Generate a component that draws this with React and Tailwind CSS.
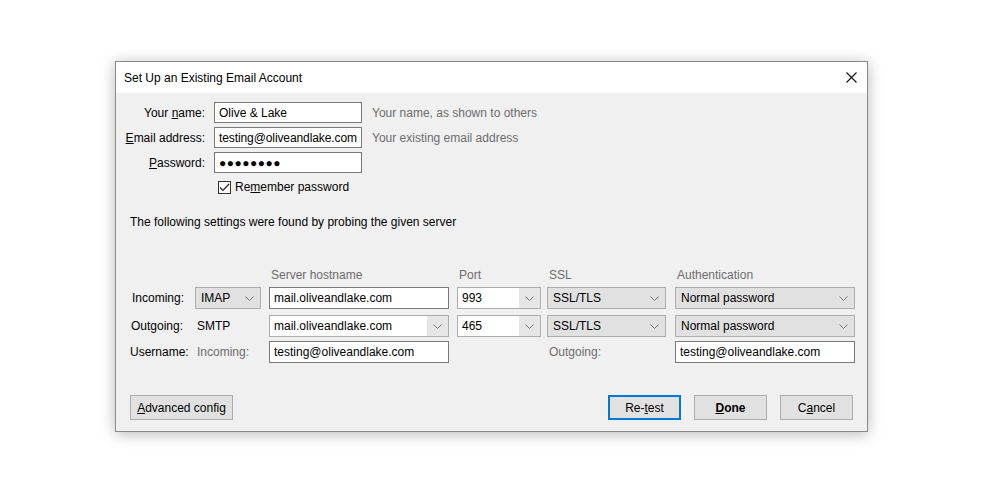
const Chevron = () => (
  <svg width="9" height="5" viewBox="0 0 9 5" className="shrink-0">
    <path d="M0.5 0.5 L4.5 4.5 L8.5 0.5" fill="none" stroke="#7a7a7a" strokeWidth="1" />
  </svg>
);

const TextBox = ({ value, className = '' }) => (
  <div className={`border border-[#7a7a7a] bg-white flex items-center pl-[4px] text-[12px] text-black ${className}`}>
    {value}
  </div>
);

const Select = ({ value, className = '' }) => (
  <div className={`h-[22px] border border-[#adadad] bg-[#e1e1e1] flex items-center justify-between pl-[5px] pr-[6px] text-[12px] text-black ${className}`}>
    <span>{value}</span>
    <Chevron />
  </div>
);

const Combo = ({ value, className = '' }) => (
  <div className={`h-[22px] border border-[#adadad] bg-white flex items-center text-[12px] text-black ${className}`}>
    <span className="flex-1 pl-[4px]">{value}</span>
    <span className="w-[21px] h-full bg-[#e6e6e6] flex items-center justify-center">
      <Chevron />
    </span>
  </div>
);

const Button = ({ children, className = '' }) => (
  <button className={`h-[25px] border bg-[#e1e1e1] text-[12px] text-black flex items-center justify-center ${className}`}>
    {children}
  </button>
);

export default function App() {
  return (
    <div
      className="min-h-[484px] w-[1002px] bg-white pt-[61px] pl-[115px]"
      style={{ fontFamily: '"Liberation Sans", Arial, sans-serif' }}
    >
      <div className="w-[753px] h-[371px] border border-[#8a8a8a] flex flex-col shadow-[0_2px_14px_rgba(0,0,0,0.28)]">
        {/* Title bar */}
        <div className="h-[31px] shrink-0 bg-white flex items-center justify-between pl-[8px] pr-[10px]">
          <span className="text-[12px] text-black">Set Up an Existing Email Account</span>
          <svg width="11" height="11" viewBox="0 0 11 11">
            <path d="M0.5 0.5 L10.5 10.5 M10.5 0.5 L0.5 10.5" stroke="#111" strokeWidth="1.1" />
          </svg>
        </div>

        {/* Body */}
        <div className="flex-1 bg-[#f0f0f0] pt-[9px] flex flex-col text-[12px] leading-[16px] text-black">
          {/* Identity fields */}
          <div className="grid grid-cols-[89px_148px_auto] gap-x-[9px] gap-y-[4px] items-center">
            <span className="text-right">Your <u>n</u>ame:</span>
            <TextBox value="Olive & Lake" className="h-[21px]" />
            <span className="pl-[1px] text-[#6d6d6d]">Your name, as shown to others</span>

            <span className="text-right"><u>E</u>mail address:</span>
            <TextBox value="testing@oliveandlake.com" className="h-[21px] tracking-[-0.1px]" />
            <span className="pl-[1px] text-[#6d6d6d]">Your existing email address</span>

            <span className="text-right"><u>P</u>assword:</span>
            <TextBox value="●●●●●●●●" className="h-[21px] text-[9px] tracking-[0.5px]" />
            <span />
          </div>

          <div className="h-[20px] mt-[4px] pl-[102px] flex items-center gap-[4px]">
            <span className="w-[13px] h-[13px] border border-[#333] bg-white flex items-center justify-center">
              <svg width="11" height="9" viewBox="0 0 11 9">
                <path d="M1 4.5 L4 7.5 L10 1" fill="none" stroke="#222" strokeWidth="1.2" />
              </svg>
            </span>
            <span>Re<u>m</u>ember password</span>
          </div>

          <div className="h-[16px] mt-[17px] pl-[14px] flex items-center">
            The following settings were found by probing the given server
          </div>

          {/* Server settings */}
          <div className="mt-[37px] pl-[14px] grid grid-cols-[65px_74px_188px_90px_128px_180px] items-center">
            <span className="h-[16px]" />
            <span />
            <span className="pl-[2px] text-[#6d6d6d]">Server hostname</span>
            <span className="pl-[2px] text-[#6d6d6d]">Port</span>
            <span className="pl-[2px] text-[#6d6d6d]">SSL</span>
            <span className="pl-[2px] text-[#6d6d6d]">Authentication</span>
          </div>

          <div className="mt-[4px] pl-[14px] grid grid-cols-[65px_74px_188px_90px_128px_180px] items-center">
            <span className="pl-[2px]">Incoming:</span>
            <Select value="IMAP" className="w-[66px]" />
            <TextBox value="mail.oliveandlake.com" className="w-[180px] h-[22px]" />
            <Combo value="993" className="w-[84px]" />
            <Select value="SSL/TLS" className="w-[119px]" />
            <Select value="Normal password" className="w-[180px]" />
          </div>

          <div className="mt-[6px] pl-[14px] grid grid-cols-[65px_74px_188px_90px_128px_180px] items-center">
            <span className="pl-[1px]">Outgoing:</span>
            <span className="pl-[2px]">SMTP</span>
            <Combo value="mail.oliveandlake.com" className="w-[180px]" />
            <Combo value="465" className="w-[84px]" />
            <Select value="SSL/TLS" className="w-[119px]" />
            <Select value="Normal password" className="w-[180px]" />
          </div>

          <div className="mt-[4px] pl-[14px] grid grid-cols-[65px_74px_188px_90px_128px_180px] items-center">
            <span>Username:</span>
            <span className="pl-[2px] text-[#6d6d6d]">Incoming:</span>
            <TextBox value="testing@oliveandlake.com" className="w-[180px] h-[22px]" />
            <span />
            <span className="pl-[2px] text-[#6d6d6d]">Outgoing:</span>
            <TextBox value="testing@oliveandlake.com" className="w-[180px] h-[22px]" />
          </div>

          {/* Buttons */}
          <div className="mt-[32px] pl-[14px] pr-[14px] flex items-center">
            <Button className="w-[103px] border-[#adadad]"><span><u>A</u>dvanced config</span></Button>
            <div className="flex-1" />
            <div className="flex gap-[13px]">
              <Button className="w-[73px] border-2 border-[#0078d7]"><span>Re-<u>t</u>est</span></Button>
              <Button className="w-[73px] border-[#adadad] font-bold"><span><u>D</u>one</span></Button>
              <Button className="w-[73px] border-[#adadad]"><span>C<u>a</u>ncel</span></Button>
            </div>
          </div>
        </div>
      </div>
    </div>
  );
}
